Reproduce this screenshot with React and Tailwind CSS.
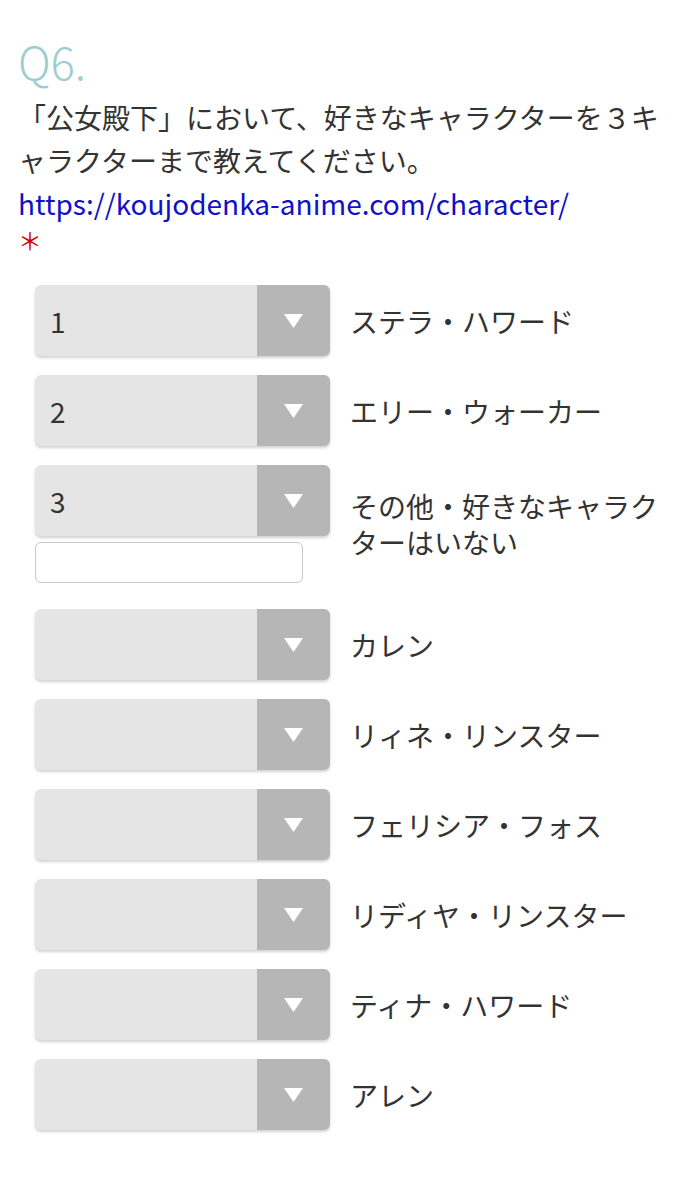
const font = { fontFamily: '"Noto Sans CJK JP", "Noto Sans", sans-serif' };

const rows = [
  { value: "1", label: "ステラ・ハワード" },
  { value: "2", label: "エリー・ウォーカー" },
  { value: "3", label: "その他・好きなキャラクターはいない", other: true },
  { value: "", label: "カレン" },
  { value: "", label: "リィネ・リンスター" },
  { value: "", label: "フェリシア・フォス" },
  { value: "", label: "リディヤ・リンスター" },
  { value: "", label: "ティナ・ハワード" },
  { value: "", label: "アレン" },
];

function Select({ value }) {
  return (
    <div className="flex h-[71px] w-[295px] overflow-hidden rounded-md bg-[#e5e5e5] shadow-[0_2px_3px_rgba(0,0,0,0.18)]">
      <div className="flex flex-1 items-center pl-[15px] text-[28px] text-[#333]">{value}</div>
      <div className="flex w-[73px] items-center justify-center bg-[#b6b6b6]">
        <svg width="19" height="14" viewBox="0 0 19 14">
          <path d="M0 0 H19 L9.5 14 Z" fill="#fff" />
        </svg>
      </div>
    </div>
  );
}

export default function App() {
  return (
    <div className="min-h-[1200px] bg-white pl-[18px] pr-[22px] pt-[30px]" style={font}>
      <div className="text-[45px] font-light leading-[62px] text-[#9dcdcf]">Q6.</div>
      <div className="mt-[4px] text-[28px] leading-[43px] text-[#333]">
        「公女殿下」において、好きなキャラクターを３キャラクターまで教えてください。
      </div>
      <a href="#" className="block text-[28px] leading-[43px] text-[#1010c8]">
        https://koujodenka-anime.com/character/
      </a>
      <div className="h-[30px] text-[24px] leading-[30px] text-[#d40000]">＊</div>

      <div className="mt-[30px] flex flex-col pl-[17px]">
        {rows.map((row, i) => (
          <div key={i} className={`flex items-center gap-[20px] ${row.other ? "pb-[26px]" : "pb-[19px]"}`}>
            <div className="flex flex-col">
              <Select value={row.value} />
              {row.other && (
                <input className="mt-[6px] h-[41px] w-[268px] rounded-md border border-[#c8c8c8] bg-white" />
              )}
            </div>
            <div className="flex-1 text-[28px] leading-[36px] text-[#333]">{row.label}</div>
          </div>
        ))}
      </div>
    </div>
  );
}
